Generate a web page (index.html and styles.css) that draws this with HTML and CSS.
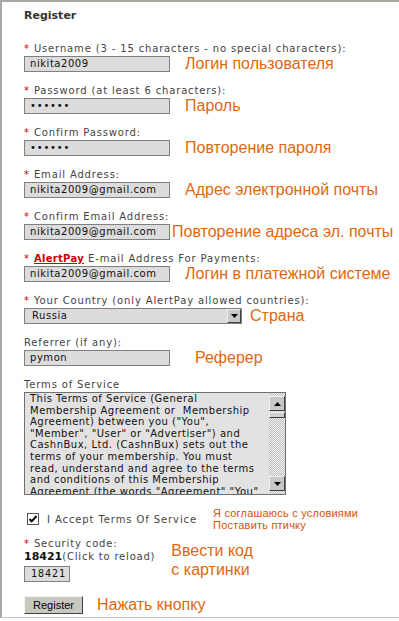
FILE: index.html
```html
<!DOCTYPE html>
<html>
<head>
  <meta charset="utf-8"/>
  <title>Register</title>
  <link rel="stylesheet" href="styles.css">
</head>
<body>

<div class="page">
  <h1 class="title">Register</h1>

  <form>
    <div class="field">
      <div class="label"><span class="req">*</span> Username (3 - 15 characters - no special characters):</div>
      <div class="row">
        <div class="input">nikita2009</div>
        <div class="hint">Логин пользователя</div>
      </div>
    </div>

    <div class="field">
      <div class="label"><span class="req">*</span> Password (at least 6 characters):</div>
      <div class="row">
        <div class="input dots">&#8226;&#8226;&#8226;&#8226;&#8226;&#8226;</div>
        <div class="hint">Пароль</div>
      </div>
    </div>

    <div class="field">
      <div class="label"><span class="req">*</span> Confirm Password:</div>
      <div class="row">
        <div class="input dots">&#8226;&#8226;&#8226;&#8226;&#8226;&#8226;</div>
        <div class="hint">Повторение пароля</div>
      </div>
    </div>

    <div class="field">
      <div class="label"><span class="req">*</span> Email Address:</div>
      <div class="row">
        <div class="input">nikita2009@gmail.com</div>
        <div class="hint">Адрес электронной почты</div>
      </div>
    </div>

    <div class="field">
      <div class="label"><span class="req">*</span> Confirm Email Address:</div>
      <div class="row">
        <div class="input">nikita2009@gmail.com</div>
        <div class="hint close">Повторение адреса эл. почты</div>
      </div>
    </div>

    <div class="field">
      <div class="label"><span class="req">*</span> <a class="brand">AlertPay</a> E-mail Address For Payments:</div>
      <div class="row">
        <div class="input">nikita2009@gmail.com</div>
        <div class="hint">Логин в платежной системе</div>
      </div>
    </div>

    <div class="field">
      <div class="label"><span class="req">*</span> Your Country (only AlertPay allowed countries):</div>
      <div class="row">
        <div class="select">
          <span class="value">Russia</span>
          <span class="drop">
            <svg width="7" height="4" viewBox="0 0 7 4"><path d="M0 0h7L3.5 4z" fill="#000"/></svg>
          </span>
        </div>
        <div class="hint">Страна</div>
      </div>
    </div>

    <div class="field">
      <div class="label">Referrer (if any):</div>
      <div class="row">
        <div class="input">pymon</div>
        <div class="hint far">Реферер</div>
      </div>
    </div>

    <div class="field">
      <div class="label">Terms of Service</div>
      <div class="tos">
        <div class="tos-text">This Terms of Service (General Membership Agreement or&nbsp; Membership Agreement) between you ("You", "Member", "User" or "Advertiser") and CashnBux, Ltd. (CashnBux) sets out the terms of your membership. You must read, understand and agree to the terms and conditions of this Membership Agreement (the words "Agreement" "You"</div>
        <div class="scrollbar">
          <span class="arrow">
            <svg width="7" height="4" viewBox="0 0 7 4"><path d="M0 4h7L3.5 0z" fill="#000"/></svg>
          </span>
          <span class="thumb"></span>
          <span class="track"></span>
          <span class="arrow">
            <svg width="7" height="4" viewBox="0 0 7 4"><path d="M0 0h7L3.5 4z" fill="#000"/></svg>
          </span>
        </div>
      </div>
    </div>

    <div class="accept">
      <label class="check">
        <svg width="12" height="12" viewBox="0 0 12 12">
          <rect x="0.5" y="0.5" width="11" height="11" fill="#fff" stroke="#555"/>
          <path d="M2.5 6l2.2 2.3L9.5 3" fill="none" stroke="#000" stroke-width="2"/>
        </svg>
        I Accept Terms Of Service
      </label>
      <div class="small-hint">Я соглашаюсь с условиями<br>Поставить птичку</div>
    </div>

    <div class="security">
      <div>
        <div class="label"><span class="req">*</span> Security code:</div>
        <div class="code"><b>18421</b>(Click to reload)</div>
        <div class="input code-input">18421</div>
      </div>
      <div class="hint big">Ввести код<br>с картинки</div>
    </div>

    <div class="submit">
      <button type="submit">Register</button>
      <div class="hint big">Нажать кнопку</div>
    </div>
  </form>
</div>

</body>
</html>
```

FILE: styles.css
```css
body {
  margin: 0;
  background-color: #fff;
  font-family: "DejaVu Sans", Verdana, sans-serif;
  color: #333;
}
.page {
  height: 615px;
  border-top: 2px solid #a8a8a0;
  border-left: 2px solid #a8a8a8;
  border-bottom: 1px solid #c0c0c0;
  padding: 0 0 0 22px;
  overflow: hidden;
}
.title {
  margin: 6px 0 0;
  font-size: 11px;
  line-height: 15px;
  font-weight: bold;
  color: #333;
}
form {
  margin-top: 19px;
}
.field {
  margin-bottom: 12px;
}
.label {
  font-size: 10px;
  line-height: 13px;
  letter-spacing: 0.85px;
  color: #444;
}
.req {
  color: #c00;
}
.brand {
  color: #c00;
  font-weight: bold;
  letter-spacing: 0.3px;
  text-decoration: underline;
}
.row {
  display: flex;
  align-items: center;
  margin-top: 1px;
}
.input {
  box-sizing: border-box;
  width: 146px;
  height: 16px;
  padding: 0 5px;
  background-color: #dcdcdc;
  border: 1px solid #808080;
  font-size: 10px;
  line-height: 14px;
  letter-spacing: 0.55px;
  color: #111;
}
.input.dots {
  font-size: 10px;
  letter-spacing: 0.8px;
}
.hint {
  margin-left: 15px;
  font-family: "Liberation Sans", Arial, sans-serif;
  font-size: 16px;
  line-height: 16px;
  color: #e2670f;
}
.hint.close {
  margin-left: 2px;
}
.hint.far {
  margin-left: 25px;
}
.select {
  box-sizing: border-box;
  display: flex;
  justify-content: space-between;
  width: 218px;
  height: 16px;
  background-color: #dcdcdc;
  border: 1px solid #808080;
  font-size: 10px;
  line-height: 14px;
  letter-spacing: 0.55px;
  color: #111;
}
.select .value {
  padding-left: 7px;
}
.drop,
.scrollbar .arrow {
  box-sizing: border-box;
  display: flex;
  align-items: center;
  justify-content: center;
  width: 14px;
  height: 14px;
  background-color: #c8c8c8;
  border: 1px solid;
  border-color: #f0f0f0 #404040 #404040 #f0f0f0;
}
.select + .hint {
  margin-left: 8px;
}
.tos {
  display: flex;
  box-sizing: border-box;
  width: 262px;
  height: 103px;
  margin-top: 1px;
  border: 1px solid #707070;
  background-color: #e2e2e2;
  overflow: hidden;
}
.tos-text {
  flex: 1;
  padding: 0 8px 0 5px;
  font-size: 10px;
  line-height: 11.6px;
  letter-spacing: 0.5px;
  color: #111;
}
.scrollbar {
  display: flex;
  flex-direction: column;
  width: 16px;
  background-color: #d8d8d8;
  background-image: repeating-conic-gradient(#bdbdbd 0 25%, #f4f4f4 0 50%);
  background-size: 2px 2px;
}
.scrollbar .arrow {
  width: 16px;
  height: 15px;
  margin-top: 3px;
}
.scrollbar .arrow:last-child {
  margin-top: 0;
  margin-bottom: 3px;
}
.thumb {
  height: 4px;
  margin-top: 1px;
  background-color: #d0d0d0;
  border: 1px solid;
  border-color: #f0f0f0 #404040 #404040 #f0f0f0;
}
.track {
  flex: 1;
}
.accept {
  display: flex;
  align-items: center;
  margin-top: 12px;
}
.check {
  display: flex;
  align-items: center;
  gap: 8px;
  margin-left: 3px;
  font-size: 10px;
  letter-spacing: 0.9px;
  color: #444;
}
.small-hint {
  margin-left: 16px;
  font-family: "Liberation Sans", Arial, sans-serif;
  font-size: 11px;
  line-height: 12px;
  letter-spacing: 0.2px;
  color: #d8500a;
}
.security {
  display: flex;
  align-items: flex-start;
  margin-top: 6px;
}
.code {
  font-size: 10px;
  line-height: 14px;
  letter-spacing: 0.8px;
  color: #444;
}
.code b {
  font-size: 11px;
  letter-spacing: 0;
  color: #111;
}
.code-input {
  width: 46px;
  margin-top: 2px;
  padding: 0 6px;
  font-family: "DejaVu Sans Mono", monospace;
  font-size: 10px;
  letter-spacing: 1px;
}
.hint.big {
  font-size: 16px;
  line-height: 19px;
}
.security .hint.big {
  margin-left: 16px;
  margin-top: 4px;
}
.submit {
  display: flex;
  align-items: center;
  margin-top: 13px;
}
.submit .hint.big {
  margin-left: 14px;
}
button {
  box-sizing: border-box;
  width: 59px;
  height: 18px;
  padding: 0;
  background-color: #c8c8c0;
  border: 1px solid;
  border-color: #f4f4f4 #404040 #404040 #f4f4f4;
  font-family: "Liberation Sans", Arial, sans-serif;
  font-size: 11px;
  color: #000;
}
```
